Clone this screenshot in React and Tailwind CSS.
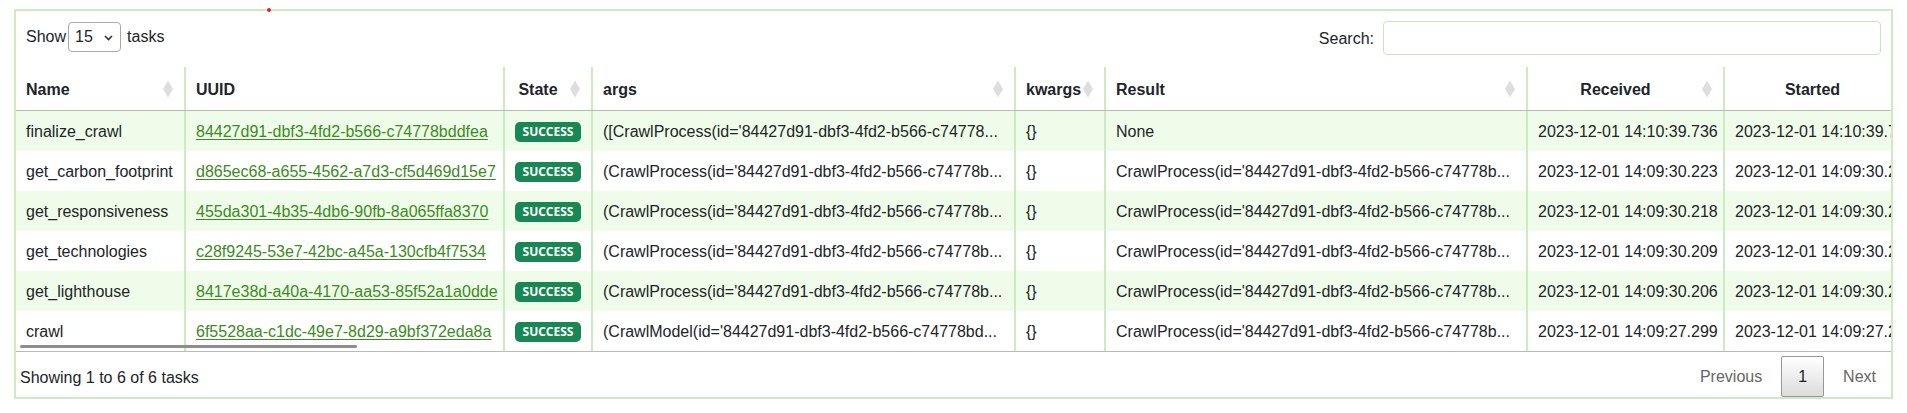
import React from "react";

const GRID = "grid grid-cols-[168px_319px_88px_423px_90px_422px_197px_197px] w-[1904px]";

const rows = [
  { name: "finalize_crawl", uuid: "84427d91-dbf3-4fd2-b566-c74778bddfea", args: "([CrawlProcess(id='84427d91-dbf3-4fd2-b566-c74778...", result: "None", received: "2023-12-01 14:10:39.736", started: "2023-12-01 14:10:39.741" },
  { name: "get_carbon_footprint", uuid: "d865ec68-a655-4562-a7d3-cf5d469d15e7", args: "(CrawlProcess(id='84427d91-dbf3-4fd2-b566-c74778b...", result: "CrawlProcess(id='84427d91-dbf3-4fd2-b566-c74778b...", received: "2023-12-01 14:09:30.223", started: "2023-12-01 14:09:30.226" },
  { name: "get_responsiveness", uuid: "455da301-4b35-4db6-90fb-8a065ffa8370", args: "(CrawlProcess(id='84427d91-dbf3-4fd2-b566-c74778b...", result: "CrawlProcess(id='84427d91-dbf3-4fd2-b566-c74778b...", received: "2023-12-01 14:09:30.218", started: "2023-12-01 14:09:30.221" },
  { name: "get_technologies", uuid: "c28f9245-53e7-42bc-a45a-130cfb4f7534", args: "(CrawlProcess(id='84427d91-dbf3-4fd2-b566-c74778b...", result: "CrawlProcess(id='84427d91-dbf3-4fd2-b566-c74778b...", received: "2023-12-01 14:09:30.209", started: "2023-12-01 14:09:30.209" },
  { name: "get_lighthouse", uuid: "8417e38d-a40a-4170-aa53-85f52a1a0dde", args: "(CrawlProcess(id='84427d91-dbf3-4fd2-b566-c74778b...", result: "CrawlProcess(id='84427d91-dbf3-4fd2-b566-c74778b...", received: "2023-12-01 14:09:30.206", started: "2023-12-01 14:09:30.208" },
  { name: "crawl", uuid: "6f5528aa-c1dc-49e7-8d29-a9bf372eda8a", args: "(CrawlModel(id='84427d91-dbf3-4fd2-b566-c74778bd...", result: "CrawlProcess(id='84427d91-dbf3-4fd2-b566-c74778b...", received: "2023-12-01 14:09:27.299", started: "2023-12-01 14:09:27.299" },
];

function SortIcon() {
  return (
    <svg className="absolute right-[11px] top-1/2 -translate-y-1/2" width="10" height="17" viewBox="0 0 10 17">
      <path d="M5 0L10 8.5L5 17L0 8.5Z" fill="#dedede" />
    </svg>
  );
}

function Th({ children, sort = true, center = false, first = false }) {
  return (
    <div className={"relative flex items-center h-[43px] pt-[2px] pl-[10px] font-bold whitespace-nowrap overflow-hidden " + (sort ? "pr-[30px] " : "pr-[10px] ") + (center ? "justify-center " : "") + (first ? "" : "border-l-2 border-[#cdeac1]")}>
      <span>{children}</span>
      {sort && <SortIcon />}
    </div>
  );
}

function Td({ children, first = false, center = false }) {
  return (
    <div className={"flex items-center h-[40px] pt-[2px] px-[10px] whitespace-nowrap overflow-hidden " + (center ? "justify-center " : "") + (first ? "" : "border-l-2 border-[#cdeac1]")}>
      {children}
    </div>
  );
}

export default function App() {
  return (
    <div className="relative w-full h-[413px] bg-white pt-[9px] px-[14px] text-[16px] text-[#212529] font-['Liberation_Sans',Arial,sans-serif]">
      <span className="absolute left-[267px] top-[8px] w-[4px] h-[4px] rounded-full bg-[#e8202a]" />
      <div className="border-2 border-[#cdeac1] h-[390px] overflow-hidden">
        <div className="flex justify-between items-start h-[56px] pt-[10px] px-[10px]">
          <div className="flex items-center h-[30px] pt-[1px]">
            <span>Show</span>
            <div className="relative ml-[2px] mr-[6px]">
              <select defaultValue="15" className="appearance-none w-[53px] h-[30px] pl-[6px] border border-[#a9a9a9] rounded-[4px] bg-white text-[16px] outline-none">
                <option>10</option>
                <option>15</option>
                <option>25</option>
                <option>50</option>
              </select>
              <svg className="absolute right-[8px] top-[13px] pointer-events-none" width="9" height="6" viewBox="0 0 9 6">
                <polyline points="1,1 4.5,4.5 8,1" fill="none" stroke="#333" strokeWidth="1.6" />
              </svg>
            </div>
            <span>tasks</span>
          </div>
          <label className="flex items-center gap-[9px]">
            <span className="pt-[1px]">Search:</span>
            <input type="search" className="w-[498px] h-[34px] border border-[#c9e6bd] rounded-[4px] px-2 outline-none" />
          </label>
        </div>

        <div className="relative overflow-hidden">
          <div className={GRID + " border-b border-[#b9b9b9]"}>
            <Th first>Name</Th>
            <Th sort={false}>UUID</Th>
            <Th center>State</Th>
            <Th>args</Th>
            <Th>kwargs</Th>
            <Th>Result</Th>
            <Th center>Received</Th>
            <Th center>Started</Th>
          </div>
          {rows.map((r, i) => (
            <div key={r.uuid} className={GRID + (i % 2 === 0 ? " bg-[#f0fcea]" : " bg-white")}>
              <Td first>{r.name}</Td>
              <Td>
                <a href="#" className="text-[#3b8b22] underline underline-offset-2">{r.uuid}</a>
              </Td>
              <Td center>
                <span className="inline-flex items-center justify-center w-[66px] h-[20px] rounded-[5px] bg-[#198754] text-white text-[12px] font-bold font-['Open_Sans',sans-serif]">SUCCESS</span>
              </Td>
              <Td>{r.args}</Td>
              <Td>{"{}"}</Td>
              <Td>{r.result}</Td>
              <Td>{r.received}</Td>
              <Td>{r.started}</Td>
            </div>
          ))}
          <div className="border-b border-[#b9b9b9]" />
          <span className="absolute left-[4px] bottom-[4px] w-[337px] h-[3px] rounded-full bg-[#8e8e8e]" />
        </div>

        <div className="flex justify-between items-center h-[45px] pt-[4px] pl-[4px]">
          <span className="pt-[2px]">Showing 1 to 6 of 6 tasks</span>
          <div className="flex items-center">
            <span className="flex items-center h-[41px] px-4 border border-transparent text-[#666]">Previous</span>
            <span className="flex items-center h-[41px] ml-[2px] px-4 border border-[#979797] rounded-[2px] bg-gradient-to-b from-white to-[#dcdcdc]">1</span>
            <span className="flex items-center h-[41px] ml-[2px] pl-4 pr-[14px] border border-transparent text-[#666]">Next</span>
          </div>
        </div>
      </div>
    </div>
  );
}
